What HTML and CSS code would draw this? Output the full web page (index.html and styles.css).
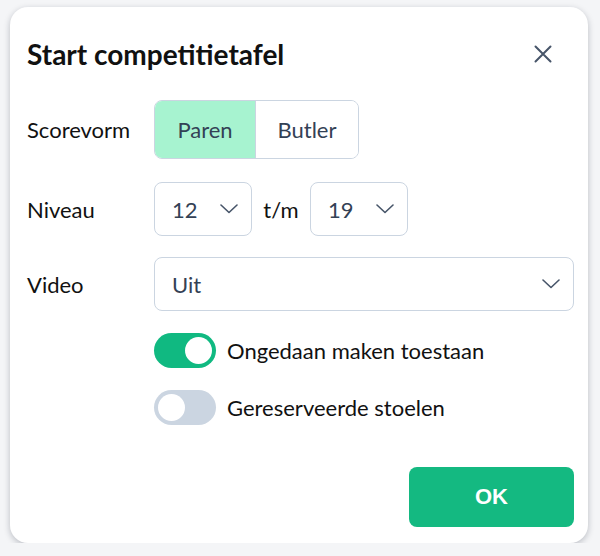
FILE: index.html
```html
<!DOCTYPE html>
<html lang="nl">
<head>
    <meta charset="UTF-8">
    <meta name="viewport" content="width=device-width, initial-scale=1.0">
    <title>Start competitietafel</title>
    <link rel="stylesheet" href="styles.css">
</head>
<body>
    <div class="dialog">
        <div class="dialog-header">
            <h2>Start competitietafel</h2>
            <button class="close-btn" aria-label="Sluiten">
                <svg width="18" height="18" viewBox="0 0 18 18"><path d="M1.5 1.5 L16.5 16.5 M16.5 1.5 L1.5 16.5" stroke="#475569" stroke-width="2" stroke-linecap="round" fill="none"/></svg>
            </button>
        </div>

        <div class="form">
            <div class="form-row row-score">
                <label>Scorevorm</label>
                <div class="segmented">
                    <button class="segment active">Paren</button>
                    <button class="segment">Butler</button>
                </div>
            </div>

            <div class="form-row row-level">
                <label>Niveau</label>
                <div class="level-range">
                    <div class="select small">
                        <span>12</span>
                        <svg class="chevron" width="18" height="10" viewBox="0 0 18 10"><path d="M1 1 L9 8.5 L17 1" stroke="#475569" stroke-width="1.6" fill="none" stroke-linecap="round" stroke-linejoin="round"/></svg>
                    </div>
                    <span class="range-sep">t/m</span>
                    <div class="select small">
                        <span>19</span>
                        <svg class="chevron" width="18" height="10" viewBox="0 0 18 10"><path d="M1 1 L9 8.5 L17 1" stroke="#475569" stroke-width="1.6" fill="none" stroke-linecap="round" stroke-linejoin="round"/></svg>
                    </div>
                </div>
            </div>

            <div class="form-row row-video">
                <label>Video</label>
                <div class="select wide">
                    <span>Uit</span>
                    <svg class="chevron" width="18" height="10" viewBox="0 0 18 10"><path d="M1 1 L9 8.5 L17 1" stroke="#475569" stroke-width="1.6" fill="none" stroke-linecap="round" stroke-linejoin="round"/></svg>
                </div>
            </div>

            <div class="form-row row-toggle">
                <span></span>
                <div class="toggle-line">
                    <span class="toggle on"><span class="knob"></span></span>
                    <span class="toggle-label">Ongedaan maken toestaan</span>
                </div>
            </div>

            <div class="form-row row-toggle">
                <span></span>
                <div class="toggle-line">
                    <span class="toggle"><span class="knob"></span></span>
                    <span class="toggle-label">Gereserveerde stoelen</span>
                </div>
            </div>
        </div>

        <div class="dialog-footer">
            <button class="ok-btn">OK</button>
        </div>
    </div>
</body>
</html>
```

FILE: styles.css
```css
body {
    margin: 0;
    background-color: #f4f5f7;
    font-family: 'Lato', 'Noto Sans', sans-serif;
    color: #111;
}

.dialog {
    box-sizing: border-box;
    width: 578px;
    height: 536px;
    margin: 7px 0 0 10px;
    padding: 0 14px 0 17px;
    background-color: #fff;
    border-radius: 18px;
    box-shadow: 0 2px 6px rgba(15, 23, 42, 0.25);
    display: flex;
    flex-direction: column;
}

.dialog-header {
    height: 93px;
    display: flex;
    align-items: center;
    justify-content: space-between;
}

.dialog-header h2 {
    margin: 0;
    font-size: 28px;
    font-weight: 700;
    color: #111;
}

.close-btn {
    background: none;
    border: none;
    padding: 0;
    margin-right: 22px;
    width: 18px;
    height: 18px;
    cursor: pointer;
}

.form {
    display: flex;
    flex-direction: column;
}

.form-row {
    display: grid;
    grid-template-columns: 127px 1fr;
    align-items: center;
}

.form-row label {
    font-size: 22px;
    color: #111;
}

.row-level {
    margin-top: 23px;
}

.row-video {
    margin-top: 21px;
}

.row-toggle {
    margin-top: 22px;
}

.segmented {
    display: flex;
    width: 205px;
    height: 59px;
    box-sizing: border-box;
    border: 1px solid #cbd5e1;
    border-radius: 8px;
    overflow: hidden;
}

.segment {
    border: none;
    background: #fff;
    font-family: inherit;
    font-size: 22px;
    color: #334155;
    padding: 0;
    cursor: pointer;
}

.segment:first-child {
    width: 101px;
    border-right: 1px solid #cbd5e1;
}

.segment:last-child {
    flex: 1;
}

.segment.active {
    background-color: #a7f3d0;
}

.level-range {
    display: flex;
    align-items: center;
}

.range-sep {
    width: 58px;
    text-align: center;
    font-size: 22px;
}

.select {
    box-sizing: border-box;
    height: 54px;
    border: 1px solid #cbd5e1;
    border-radius: 8px;
    display: flex;
    align-items: center;
    justify-content: space-between;
    padding: 0 13px 0 17px;
    font-size: 22px;
    color: #334155;
}

.select.small {
    width: 98px;
}

.select.wide {
    width: 420px;
}

.toggle-line {
    display: flex;
    align-items: center;
}

.toggle {
    position: relative;
    width: 62px;
    height: 35px;
    border-radius: 18px;
    background-color: #cbd5e1;
    margin-right: 11px;
}

.toggle.on {
    background-color: #10b981;
}

.knob {
    position: absolute;
    top: 4px;
    left: 4px;
    width: 27px;
    height: 27px;
    border-radius: 50%;
    background-color: #fff;
}

.toggle.on .knob {
    left: 31px;
}

.toggle-label {
    font-size: 22px;
    color: #111;
}

.dialog-footer {
    display: flex;
    justify-content: flex-end;
    margin-top: 42px;
}

.ok-btn {
    width: 165px;
    height: 60px;
    border: none;
    border-radius: 8px;
    background-color: #14b981;
    color: #fff;
    font-family: 'Liberation Sans', Arial, sans-serif;
    font-weight: 700;
    font-size: 22px;
    cursor: pointer;
}
```
